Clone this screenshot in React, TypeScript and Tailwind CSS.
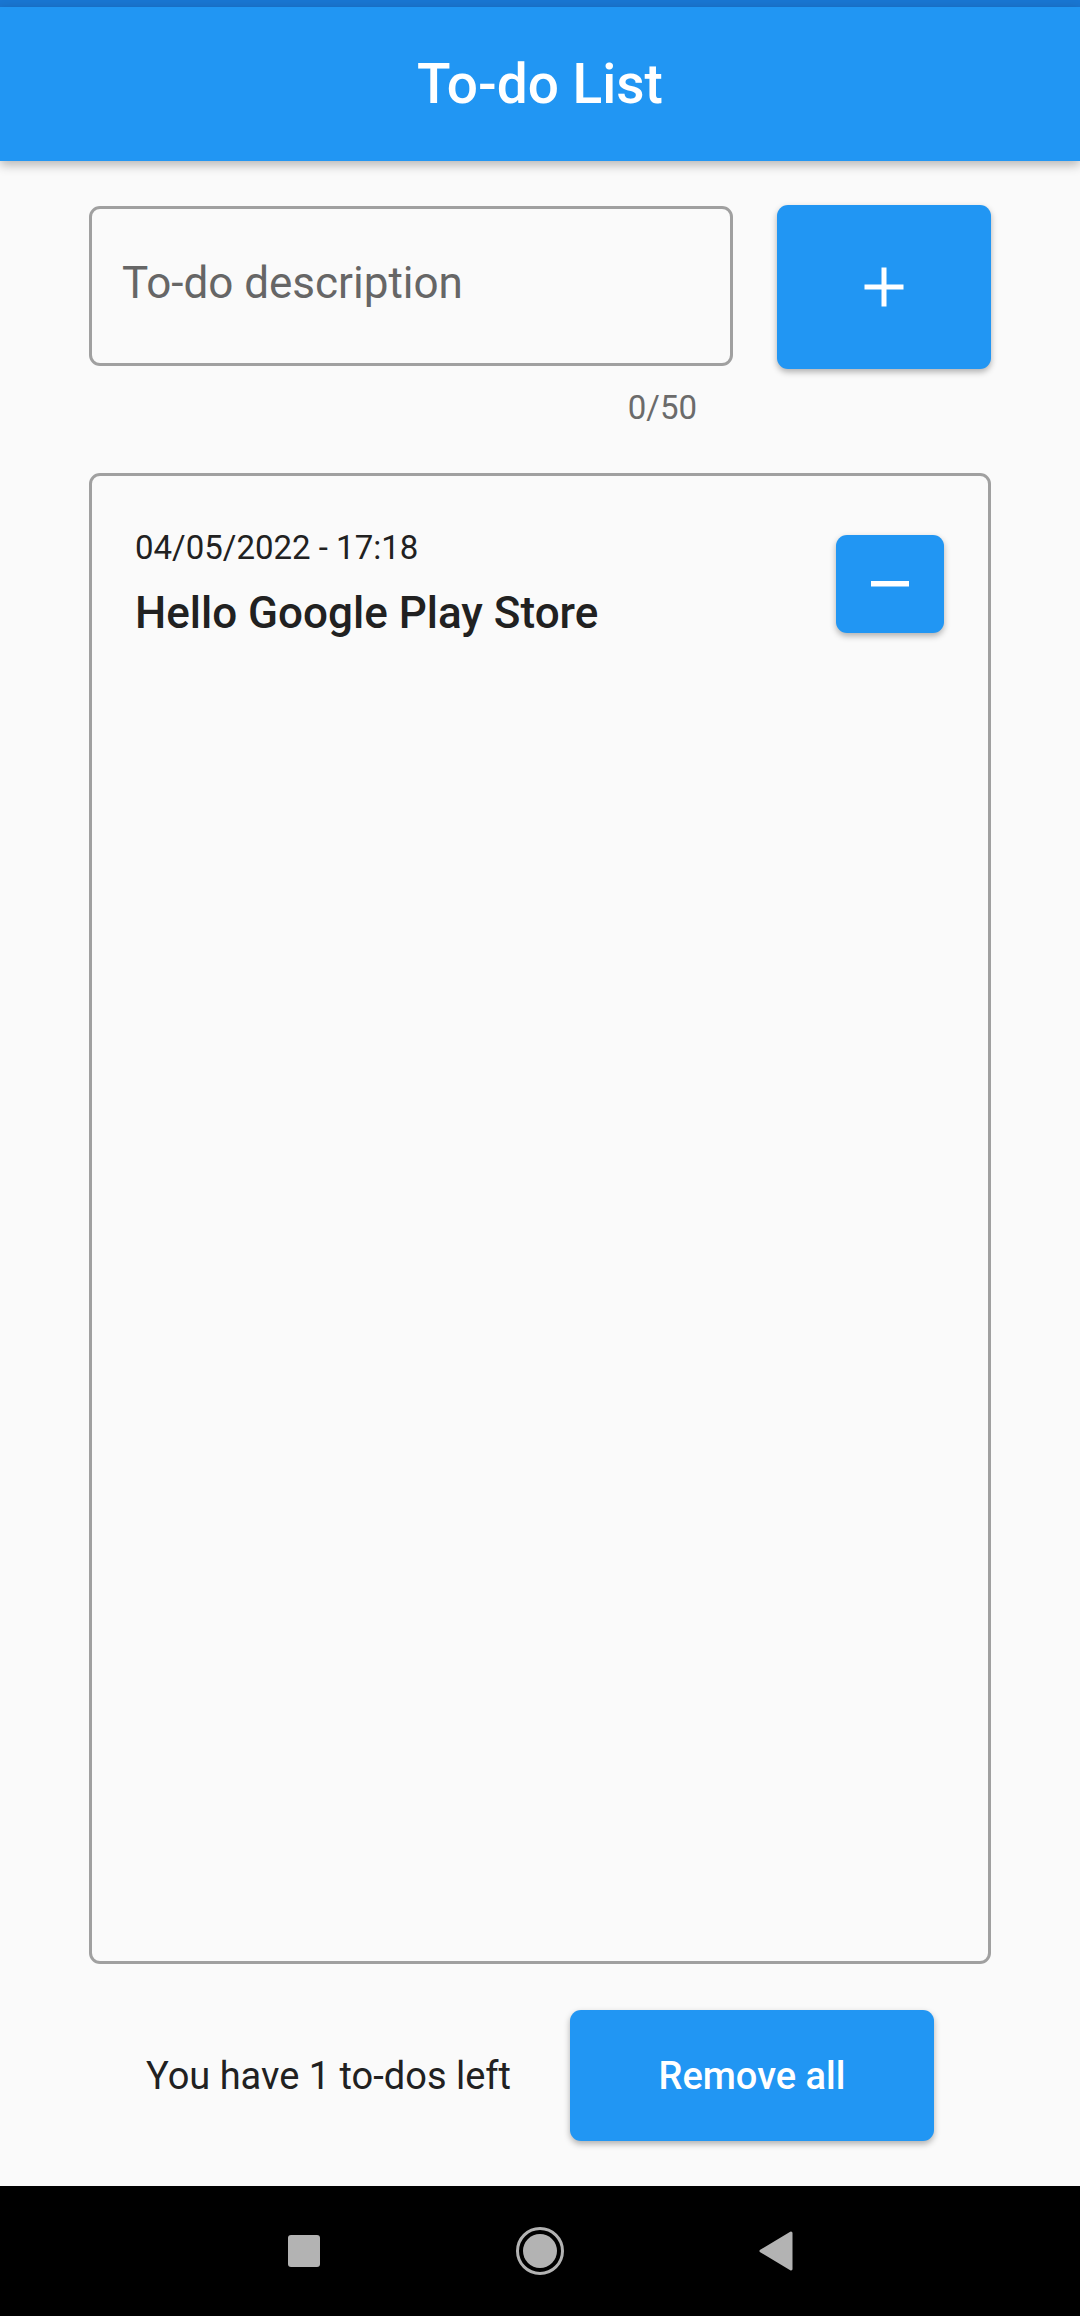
import React from "react";

const font = { fontFamily: "Roboto, 'Noto Sans', sans-serif" };

const PlusIcon = () => (
  <svg width="40" height="40" viewBox="0 0 40 40">
    <rect x="17.5" y="0.5" width="5" height="39" fill="#fff" />
    <rect x="0.5" y="17.5" width="39" height="5" fill="#fff" />
  </svg>
);

const MinusIcon = () => (
  <svg width="38" height="6" viewBox="0 0 38 6">
    <rect x="0" y="0" width="38" height="5.5" fill="#fff" />
  </svg>
);

const NavBar = () => (
  <div className="h-[130px] bg-black flex justify-center items-center">
    <div className="w-[236px] flex justify-center">
      <div className="w-[32px] h-[32px] rounded-[3px] bg-[#b3b3b3]" />
    </div>
    <div className="w-[236px] flex justify-center">
      <svg width="50" height="50" viewBox="0 0 50 50">
        <circle cx="25" cy="25" r="22.5" fill="none" stroke="#b3b3b3" strokeWidth="3" />
        <circle cx="25" cy="25" r="17" fill="#b3b3b3" />
      </svg>
    </div>
    <div className="w-[236px] flex justify-center">
      <svg width="34" height="40" viewBox="0 0 34 40">
        <path d="M32 2 L2 20 L32 38 Z" fill="#b3b3b3" stroke="#b3b3b3" strokeWidth="3" strokeLinejoin="round" />
      </svg>
    </div>
  </div>
);

export default function App() {
  return (
    <div className="w-[1080px] h-[2316px] bg-[#fafafa] flex flex-col" style={font}>
      <div className="h-[7px] bg-[#1976d2]" />
      <div className="h-[154px] bg-[#2196f3] flex items-center justify-center shadow-[0_4px_10px_rgba(0,0,0,0.28)] relative z-10">
        <span className="text-white text-[55px] font-medium leading-none">To-do List</span>
      </div>

      <div className="flex-1 flex flex-col px-[89px] pt-[44px] pb-[45px]">
        <div className="flex items-start justify-between">
          <div className="w-[644px] mt-[1px] flex flex-col">
            <div className="h-[160px] rounded-[11px] border-[3px] border-[#a0a0a0] flex items-center pl-[30px] pb-[6px]">
              <span className="text-[44px] text-[#666666] leading-none">To-do description</span>
            </div>
            <div className="mt-[22px] h-[40px] pr-[36px] text-right text-[33px] leading-[40px] text-[#6b6b6b]">
              0/50
            </div>
          </div>
          <button className="w-[214px] h-[164px] rounded-[11px] bg-[#2196f3] flex items-center justify-center shadow-[0_3px_6px_rgba(0,0,0,0.3)]">
            <PlusIcon />
          </button>
        </div>

        <div className="mt-[45px] flex-1 rounded-[11px] border-[3px] border-[#a0a0a0] pt-[52px] pl-[43px] pr-[44px]">
          <div className="flex items-start">
            <div className="flex-1 flex flex-col">
              <span className="text-[33px] leading-[40px] text-[#212121]">04/05/2022 - 17:18</span>
              <span className="mt-[20px] text-[44px] leading-[50px] font-medium text-[#212121]">
                Hello Google Play Store
              </span>
            </div>
            <button className="mt-[7px] w-[108px] h-[98px] rounded-[11px] bg-[#2196f3] flex items-center justify-center shadow-[0_3px_6px_rgba(0,0,0,0.3)]">
              <MinusIcon />
            </button>
          </div>
        </div>

        <div className="mt-[46px] flex items-center justify-center gap-[59px]">
          <span className="text-[38px] text-[#212121] leading-none">You have 1 to-dos left</span>
          <button className="w-[364px] h-[131px] rounded-[11px] bg-[#2196f3] flex items-center justify-center shadow-[0_3px_6px_rgba(0,0,0,0.3)]">
            <span className="text-white text-[38px] font-medium leading-none">Remove all</span>
          </button>
        </div>
      </div>

      <NavBar />
    </div>
  );
}
